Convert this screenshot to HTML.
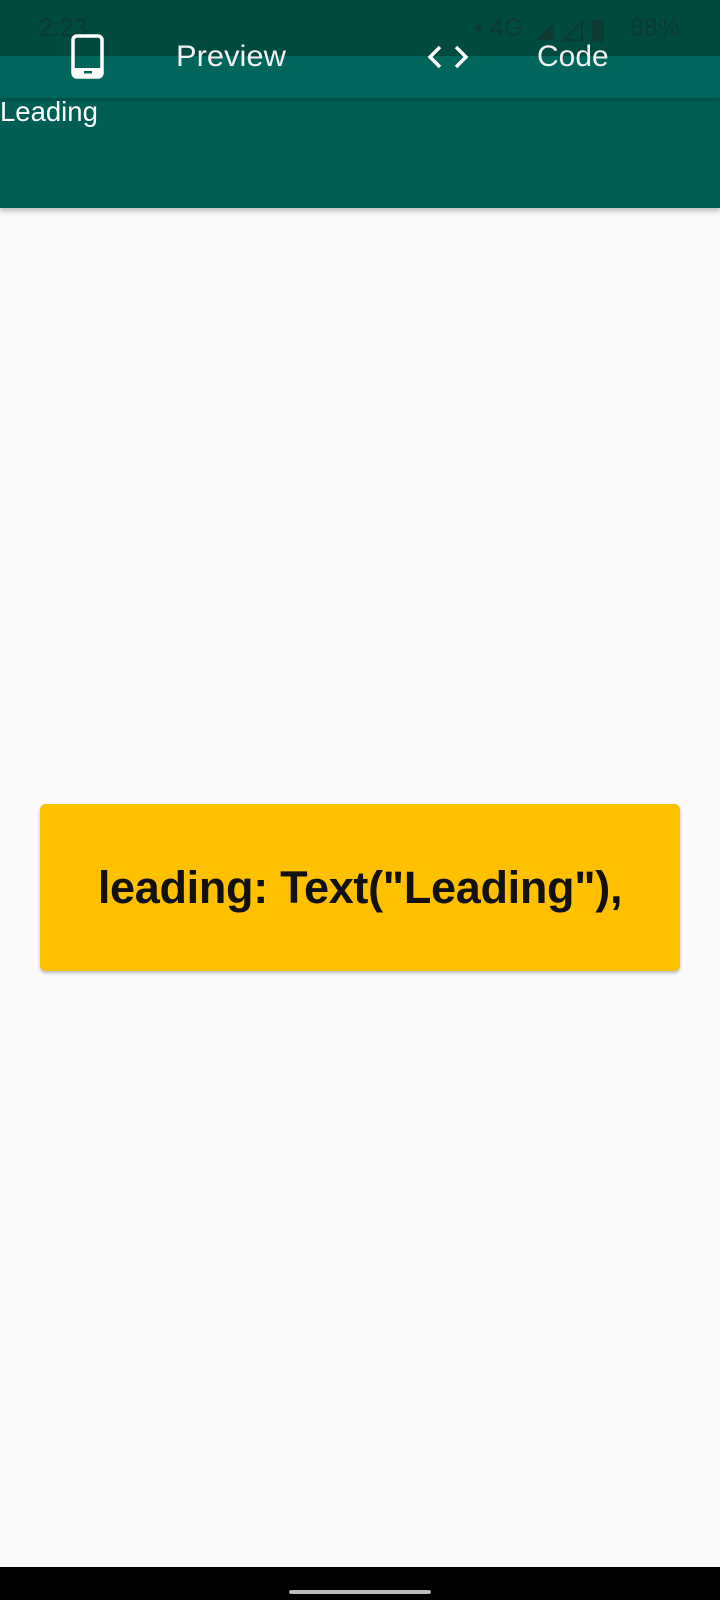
<!DOCTYPE html>
<html><head><meta charset="utf-8"><style>
body{margin:0;width:720px;height:1600px;background:#fafafa;position:relative;overflow:hidden;font-family:"Liberation Sans",sans-serif}
.abs{position:absolute}
</style></head><body>
<div class="abs" style="left:0;top:0;width:720px;height:208px;background:#005e54;box-shadow:0 3px 5px rgba(0,0,0,.25)"></div>
<div class="abs" style="left:0;top:0;width:720px;height:56px;background:#004a40"></div>
<div class="abs" style="left:0;top:56px;width:720px;height:42px;background:#00665b;box-shadow:0 2px 3px rgba(0,0,0,.2)"></div>
<div class="abs" style="left:39px;top:14px;font-size:25px;color:#0d3a33">2:23</div>
<div class="abs" style="left:474px;top:14px;font-size:25px;color:#0d3a33">• 4G</div>
<svg class="abs" style="left:534px;top:18px" width="80" height="26"><path d="M2 22 L20 4 L20 22Z" fill="#0d3a33"/><path d="M30 22 L48 4 L48 22Z" fill="none" stroke="#0d3a33" stroke-width="2"/><rect x="58" y="2" width="12" height="22" rx="1" fill="#0d3a33"/></svg>
<div class="abs" style="left:630px;top:14px;font-size:25px;color:#0d3a33">88%</div>
<svg class="abs" style="left:71px;top:34px" width="34" height="45"><rect x="2" y="2" width="29" height="41" rx="4" fill="none" stroke="#fff" stroke-width="3.5"/><rect x="2" y="34" width="29" height="9" fill="#fff"/><rect x="13" y="37" width="8" height="2.5" fill="#00665b"/></svg>
<div class="abs" style="left:176px;top:40px;font-size:30px;color:#f0f0f0;transform:scaleX(1.03);transform-origin:left">Preview</div>
<svg class="abs" style="left:426px;top:44px" width="44" height="26"><path d="M14 3 L4 13 L14 23 M30 3 L40 13 L30 23" fill="none" stroke="#fff" stroke-width="3.5"/></svg>
<div class="abs" style="left:537px;top:40px;font-size:30px;color:#f0f0f0">Code</div>
<div class="abs" style="left:0;top:96px;font-size:27.5px;color:#fff">Leading</div>
<div class="abs" style="left:40px;top:804px;width:640px;height:167px;background:#ffc000;border-radius:6px;box-shadow:0 2px 3px rgba(0,0,0,.25);display:flex;align-items:center;justify-content:center;font-size:45px;font-weight:bold;color:#111;letter-spacing:-0.3px">leading: Text("Leading"),</div>
<div class="abs" style="left:0;top:1567px;width:720px;height:33px;background:#000"></div>
<div class="abs" style="left:289px;top:1590px;width:142px;height:4px;border-radius:2px;background:#bbb"></div>
</body></html>
